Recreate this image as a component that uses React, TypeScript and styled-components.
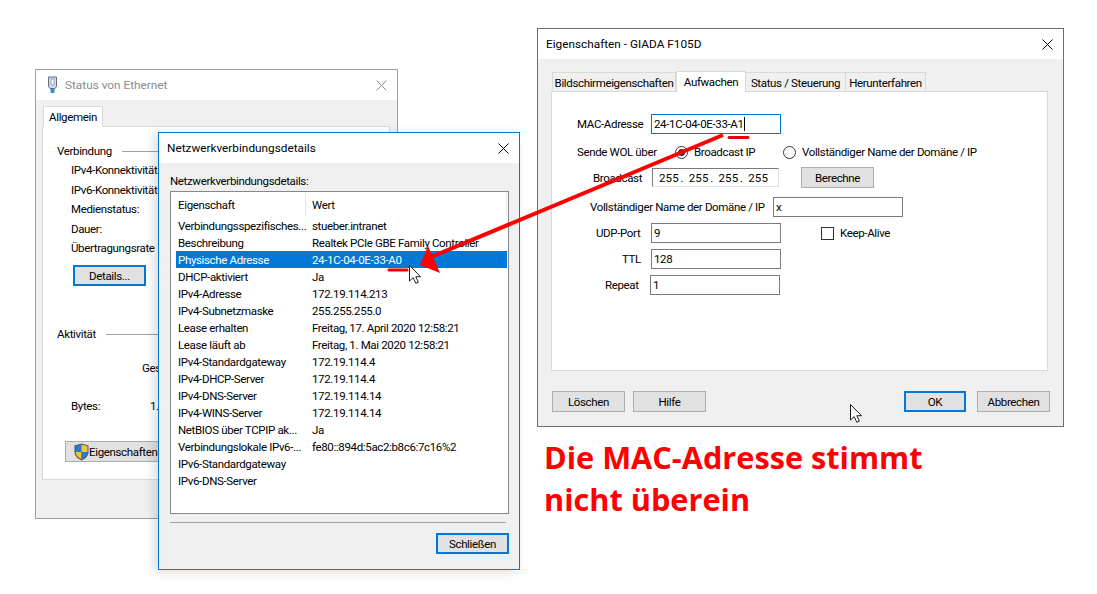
import React from "react";
import styled, { createGlobalStyle } from "styled-components";

const Global = createGlobalStyle`
  html, body { margin: 0; padding: 0; background: #fff; }
  * { box-sizing: border-box; }
`;

const Canvas = styled.div`
  position: relative;
  width: 1097px;
  height: 594px;
  overflow: hidden;
  background: #fff;
  color: #000;
  font-family: Roboto, "Open Sans", "Liberation Sans", sans-serif;
  font-size: 11.5px;
  letter-spacing: -0.35px;
  line-height: 16px;
`;

const Win = styled.section<{ $x: number; $y: number; $w: number; $h: number; $border: string; $shadow?: boolean }>`
  position: absolute;
  left: ${(p) => p.$x}px;
  top: ${(p) => p.$y}px;
  width: ${(p) => p.$w}px;
  height: ${(p) => p.$h}px;
  border: 1px solid ${(p) => p.$border};
  background: #f0f0f0;
  display: flex;
  flex-direction: column;
  ${(p) => (p.$shadow ? "box-shadow: -4px 2px 10px rgba(0,0,0,0.14);" : "")}
`;

const TitleBar = styled.header<{ $muted?: boolean; $pad: number }>`
  height: 30px;
  flex: none;
  background: #fff;
  display: flex;
  align-items: center;
  padding: 0 9px 0 ${(p) => p.$pad}px;
  font-size: 11.8px;
  letter-spacing: 0;
  color: ${(p) => (p.$muted ? "#8a8a8a" : "#000")};
`;

const TitleText = styled.span`
  flex: 1;
`;

const CloseIcon = styled.svg`
  width: 11px;
  height: 11px;
  flex: none;
  margin-right: 1px;
`;

/* ---------- buttons ---------- */
const Btn = styled.button<{ $w: number; $focus?: boolean; $h?: number }>`
  width: ${(p) => p.$w}px;
  height: ${(p) => p.$h ?? 21}px;
  flex: none;
  padding: 1px 0 0;
  background: #e1e1e1;
  border: ${(p) => (p.$focus ? "2px solid #0078d7" : "1px solid #adadad")};
  font: inherit;
  letter-spacing: inherit;
  color: #000;
  display: flex;
  align-items: center;
  justify-content: center;
`;

/* ---------- window 1: Status ---------- */
const StatusBody = styled.div`
  flex: 1;
  padding: 6px 7px 38px 6px;
  display: flex;
  flex-direction: column;
`;

const StatusTab = styled.div`
  width: 60px;
  height: 21px;
  margin-left: 1px;
  margin-bottom: -1px;
  background: #fff;
  border: 1px solid #d9d9d9;
  border-bottom: none;
  position: relative;
  z-index: 1;
  display: flex;
  align-items: center;
  justify-content: center;
`;

const StatusPanel = styled.div`
  flex: 1;
  background: #fff;
  border: 1px solid #d9d9d9;
  padding: 16px 8px 0 14px;
  display: flex;
  flex-direction: column;
`;

const GroupHead = styled.div<{ $mt?: number }>`
  display: flex;
  align-items: center;
  gap: 10px;
  height: 16px;
  margin-top: ${(p) => p.$mt ?? 0}px;
  &::after {
    content: "";
    flex: 1;
    height: 1px;
    background: #a0a0a0;
  }
`;

const StatusList = styled.div`
  margin: 2px 0 0 14px;
`;

const StatusLine = styled.div`
  height: 19.5px;
  line-height: 19.5px;
  white-space: nowrap;
`;

const StatRow = styled.div<{ $mt: number; $pl: number }>`
  display: flex;
  height: 16px;
  margin-top: ${(p) => p.$mt}px;
  padding-left: ${(p) => p.$pl}px;
`;

const BytesLabel = styled.span`
  width: 79px;
`;

const DetailsBtn = styled(Btn)`
  margin: 6.5px 0 0 16px;
`;

const PropsBtn = styled(Btn)`
  margin: 27px 0 0 8px;
  justify-content: flex-start;
  padding-left: 8px;
  gap: 0;
  white-space: nowrap;
`;

/* ---------- window 2: Details ---------- */
const DetailsBody = styled.div`
  flex: 1;
  padding: 10px 10px 0 11px;
  display: flex;
  flex-direction: column;
`;

const ListBox = styled.div`
  height: 323px;
  margin-top: 2px;
  padding: 0 1px 0 5px;
  background: #fff;
  border: 1px solid #828790;
`;

const ListHead = styled.div`
  height: 25px;
  display: grid;
  grid-template-columns: 127px 1fr;
  align-items: center;
  padding: 0 0 0 2px;
`;

const HeadCell = styled.div`
  height: 24px;
  line-height: 24px;
  & + & {
    border-left: 1px solid #e5e5e5;
    border-right: 1px solid #e5e5e5;
    padding-left: 6px;
  }
`;

const ListRow = styled.div<{ $selected?: boolean }>`
  height: 17px;
  line-height: 19px;
  display: grid;
  grid-template-columns: 134px 1fr;
  padding-left: 2px;
  white-space: nowrap;
  background: ${(p) => (p.$selected ? "#0078d7" : "transparent")};
  color: ${(p) => (p.$selected ? "#fff" : "#000")};
`;

const Cell = styled.span`
  height: 17px;
`;

const Separator = styled.hr`
  margin: 8px 3px 0 0;
  border: none;
  height: 1px;
  background: #a0a0a0;
`;

const DetailsFooter = styled.div`
  display: flex;
  justify-content: flex-end;
  margin-top: 10px;
`;

/* ---------- window 3: Properties ---------- */
const PropsBody = styled.div`
  flex: 1;
  padding: 12px 15px 0 13px;
  display: flex;
  flex-direction: column;
`;

const TabStrip = styled.div`
  display: flex;
  height: 21px;
  padding-left: 2px;
  margin-bottom: -1px;
  position: relative;
  z-index: 1;
`;

const PropTab = styled.div<{ $w: number; $active?: boolean }>`
  width: ${(p) => p.$w}px;
  height: ${(p) => (p.$active ? 21 : 20)}px;
  margin-top: ${(p) => (p.$active ? 0 : 1)}px;
  padding: ${(p) => (p.$active ? "0 0 1px" : "1px 0 0")};
  background: ${(p) => (p.$active ? "#fff" : "#f0f0f0")};
  border: 1px solid #d9d9d9;
  border-bottom: ${(p) => (p.$active ? "none" : "1px solid #d9d9d9")};
  margin-left: ${(p) => (p.$active ? "0" : "-1px")};
  display: flex;
  align-items: center;
  justify-content: center;
  white-space: nowrap;
`;

const PropPanel = styled.div`
  height: 280px;
  flex: none;
  background: #fff;
  border: 1px solid #d9d9d9;
  padding-top: 22px;
  display: flex;
  flex-direction: column;
`;

const FormRow = styled.div<{ $mt?: number; $h?: number; $pl: number }>`
  display: flex;
  align-items: center;
  height: ${(p) => p.$h ?? 20}px;
  margin-top: ${(p) => p.$mt ?? 0}px;
  padding-left: ${(p) => p.$pl}px;
  white-space: nowrap;
`;

const FieldLabel = styled.span<{ $w?: number }>`
  ${(p) => (p.$w ? `width: ${p.$w}px;` : "")}
  flex: none;
`;

const TextBox = styled.div<{ $w?: number; $focus?: boolean }>`
  width: ${(p) => p.$w ?? 130}px;
  height: 20px;
  flex: none;
  background: #fff;
  border: 1px solid ${(p) => (p.$focus ? "#0078d7" : "#7a7a7a")};
  padding-left: 2px;
  line-height: 18px;
  display: flex;
  align-items: center;
`;

const Caret = styled.span`
  width: 1px;
  height: 14px;
  background: #000;
`;

const IpBox = styled.div`
  width: 127px;
  height: 19px;
  flex: none;
  display: flex;
  align-items: center;
  background: #fff;
  border-style: solid;
  border-width: 1px;
  border-color: #7a7a7a #e3e3e3 #e3e3e3 #7a7a7a;
  padding: 1px 0 0 6px;
`;

const Octet = styled.span`
  width: 32.5px;
  display: flex;
  justify-content: space-between;
  padding-right: 5px;
  letter-spacing: 0.15px;
`;

const Radio = styled.span<{ $on?: boolean }>`
  width: 13px;
  height: 13px;
  flex: none;
  margin-right: 6px;
  border: 1px solid #333;
  border-radius: 50%;
  background: #fff;
  display: flex;
  align-items: center;
  justify-content: center;
  &::after {
    content: "";
    width: 7px;
    height: 7px;
    border-radius: 50%;
    background: ${(p) => (p.$on ? "#333" : "transparent")};
  }
`;

const Check = styled.span`
  width: 13px;
  height: 13px;
  flex: none;
  margin: 0 6px 0 40px;
  border: 1px solid #333;
  background: #fff;
`;

const RowButton = styled(Btn)`
  margin-left: 22px;
`;

const PropsFooter = styled.div`
  display: flex;
  margin-top: 20px;
  padding-left: 1px;
  margin-right: -2px;
  gap: 8px;
`;

const FooterRight = styled.div`
  margin-left: auto;
  display: flex;
  gap: 11px;
`;

/* ---------- annotations ---------- */
const Overlay = styled.svg`
  position: absolute;
  left: 0;
  top: 0;
  width: 1097px;
  height: 594px;
  pointer-events: none;
`;

const Headline = styled.h2`
  position: absolute;
  left: 544px;
  top: 436px;
  margin: 0;
  color: #ff0000;
  font-family: "Open Sans", "Noto Sans", sans-serif;
  font-size: 30.7px;
  font-weight: 700;
  letter-spacing: 0;
  line-height: 42px;
  white-space: nowrap;
`;

const rows: [string, string, boolean?][] = [
  ["Verbindungsspezifisches...", "stueber.intranet"],
  ["Beschreibung", "Realtek PCIe GBE Family Controller"],
  ["Physische Adresse", "24-1C-04-0E-33-A0", true],
  ["DHCP-aktiviert", "Ja"],
  ["IPv4-Adresse", "172.19.114.213"],
  ["IPv4-Subnetzmaske", "255.255.255.0"],
  ["Lease erhalten", "Freitag, 17. April 2020 12:58:21"],
  ["Lease läuft ab", "Freitag, 1. Mai 2020 12:58:21"],
  ["IPv4-Standardgateway", "172.19.114.4"],
  ["IPv4-DHCP-Server", "172.19.114.4"],
  ["IPv4-DNS-Server", "172.19.114.14"],
  ["IPv4-WINS-Server", "172.19.114.14"],
  ["NetBIOS über TCPIP ak...", "Ja"],
  ["Verbindungslokale IPv6-...", "fe80::894d:5ac2:b8c6:7c16%2"],
  ["IPv6-Standardgateway", ""],
  ["IPv6-DNS-Server", ""],
];

const Close = ({ color = "#000" }: { color?: string }) => (
  <CloseIcon viewBox="0 0 11 11">
    <path d="M0.5 0.5L10.5 10.5M10.5 0.5L0.5 10.5" stroke={color} strokeWidth="1" fill="none" />
  </CloseIcon>
);

const Cursor = ({ x, y }: { x: number; y: number }) => (
  <path
    transform={`translate(${x} ${y})`}
    d="M0.5 0.5V16L4.2 12.6L6.8 18.3L9.4 17.2L6.8 11.7H11.6Z"
    fill="#fff"
    stroke="#222"
    strokeWidth="1"
    strokeLinejoin="round"
  />
);

export default function App() {
  return (
    <Canvas>
      <Global />

      <Win $x={35} $y={69} $w={363} $h={450} $border="#a0a0a0">
        <TitleBar $muted $pad={11}>
          <svg width="11" height="18" viewBox="0 0 11 18" style={{ marginRight: 7 }}>
            <path d="M1.5 1h8v9.5l-1.5 2h-5l-1.5-2z" fill="#cfd8e3" stroke="#5d6f86" />
            <path d="M4 3h3v6H4z" fill="#fff" stroke="#7b8ca3" strokeWidth=".7" />
            <path d="M3.5 13h4v4h-4z" fill="#2f8fd8" />
          </svg>
          <TitleText>Status von Ethernet</TitleText>
          <Close color="#8a8a8a" />
        </TitleBar>
        <StatusBody>
          <StatusTab>Allgemein</StatusTab>
          <StatusPanel>
            <GroupHead>Verbindung</GroupHead>
            <StatusList>
              <StatusLine>IPv4-Konnektivität</StatusLine>
              <StatusLine>IPv6-Konnektivität</StatusLine>
              <StatusLine>Medienstatus:</StatusLine>
              <StatusLine>Dauer:</StatusLine>
              <StatusLine>Übertragungsrate</StatusLine>
            </StatusList>
            <DetailsBtn $w={73} $focus>Details...</DetailsBtn>
            <GroupHead $mt={40}>Aktivität</GroupHead>
            <StatRow $mt={18} $pl={85}>Ges</StatRow>
            <StatRow $mt={22} $pl={14}>
              <BytesLabel>Bytes:</BytesLabel>
              <span>1.</span>
            </StatRow>
            <PropsBtn $w={130} $h={21}>
              <svg width="15" height="18" viewBox="0 0 15 18">
                <path d="M7.5 0.5L14.5 2.5V9C14.5 13 11 16 7.5 17.5C4 16 0.5 13 0.5 9V2.5Z" fill="#555" />
                <path d="M7.5 1.5V9H1.5V3.2Z" fill="#1f7fd6" />
                <path d="M7.5 1.5L13.5 3.2V9H7.5Z" fill="#f6c234" />
                <path d="M7.5 9V16.3C4.5 15 1.9 12.6 1.5 9Z" fill="#f6c234" />
                <path d="M7.5 9H13.5C13.1 12.6 10.5 15 7.5 16.3Z" fill="#1f7fd6" />
              </svg>
              Eigenschaften
            </PropsBtn>
          </StatusPanel>
        </StatusBody>
      </Win>

      <Win $x={158} $y={132} $w={362} $h={438} $border="#0078d7" $shadow>
        <TitleBar $pad={8}>
          <TitleText>Netzwerkverbindungsdetails</TitleText>
          <Close />
        </TitleBar>
        <DetailsBody>
          <div>Netzwerkverbindungsdetails:</div>
          <ListBox>
            <ListHead>
              <HeadCell>Eigenschaft</HeadCell>
              <HeadCell>Wert</HeadCell>
            </ListHead>
            {rows.map(([k, v, sel]) => (
              <ListRow key={k} $selected={sel}>
                <Cell>{k}</Cell>
                <Cell>{v}</Cell>
              </ListRow>
            ))}
          </ListBox>
          <Separator />
          <DetailsFooter>
            <Btn $w={73} $focus>Schließen</Btn>
          </DetailsFooter>
        </DetailsBody>
      </Win>

      <Win $x={537} $y={28} $w={527} $h={399} $border="#6e6e6e">
        <TitleBar $pad={8}>
          <TitleText>Eigenschaften - GIADA F105D</TitleText>
          <Close />
        </TitleBar>
        <PropsBody>
          <TabStrip>
            <PropTab $w={124}>Bildschirmeigenschaften</PropTab>
            <PropTab $w={70} $active>Aufwachen</PropTab>
            <PropTab $w={101}>Status / Steuerung</PropTab>
            <PropTab $w={81}>Herunterfahren</PropTab>
          </TabStrip>
          <PropPanel>
            <FormRow $pl={25}>
              <FieldLabel $w={74}>MAC-Adresse</FieldLabel>
              <TextBox $focus>24-1C-04-0E-33-A1<Caret /></TextBox>
            </FormRow>
            <FormRow $pl={25} $mt={9} $h={18}>
              <FieldLabel $w={98}>Sende WOL über</FieldLabel>
              <Radio $on />
              <FieldLabel $w={89}>Broadcast IP</FieldLabel>
              <Radio />
              <FieldLabel>Vollständiger Name der Domäne / IP</FieldLabel>
            </FormRow>
            <FormRow $pl={41} $mt={6} $h={21}>
              <FieldLabel $w={59}>Broadcast</FieldLabel>
              <IpBox>
                <Octet>255<span>.</span></Octet>
                <Octet>255<span>.</span></Octet>
                <Octet>255<span>.</span></Octet>
                <Octet>255</Octet>
              </IpBox>
              <RowButton $w={73}>Berechne</RowButton>
            </FormRow>
            <FormRow $pl={38} $mt={9}>
              <FieldLabel $w={183}>Vollständiger Name der Domäne / IP</FieldLabel>
              <TextBox>x</TextBox>
            </FormRow>
            <FormRow $pl={44} $mt={6}>
              <FieldLabel $w={55}>UDP-Port</FieldLabel>
              <TextBox>9</TextBox>
              <Check />
              <FieldLabel>Keep-Alive</FieldLabel>
            </FormRow>
            <FormRow $pl={70} $mt={6}>
              <FieldLabel $w={29}>TTL</FieldLabel>
              <TextBox>128</TextBox>
            </FormRow>
            <FormRow $pl={53} $mt={6}>
              <FieldLabel $w={45}>Repeat</FieldLabel>
              <TextBox>1</TextBox>
            </FormRow>
          </PropPanel>
          <PropsFooter>
            <Btn $w={73}>Löschen</Btn>
            <Btn $w={73}>Hilfe</Btn>
            <FooterRight>
              <Btn $w={62} $focus>OK</Btn>
              <Btn $w={73}>Abbrechen</Btn>
            </FooterRight>
          </PropsFooter>
        </PropsBody>
      </Win>

      <Headline>
        Die MAC-Adresse stimmt
        <br />
        nicht überein
      </Headline>

      <Overlay viewBox="0 0 1097 594">
        <Cursor x={409} y={265} />
        <Cursor x={850} y={404} />
        <path d="M723 135L431 257" stroke="#ff0000" strokeWidth="4" fill="none" />
        <path d="M420 265L428 246L440 273Z" fill="#ff0000" />
        <path d="M729 137.5H748M389 270H407" stroke="#e8000b" strokeWidth="3" strokeLinecap="round" fill="none" />
      </Overlay>
    </Canvas>
  );
}
